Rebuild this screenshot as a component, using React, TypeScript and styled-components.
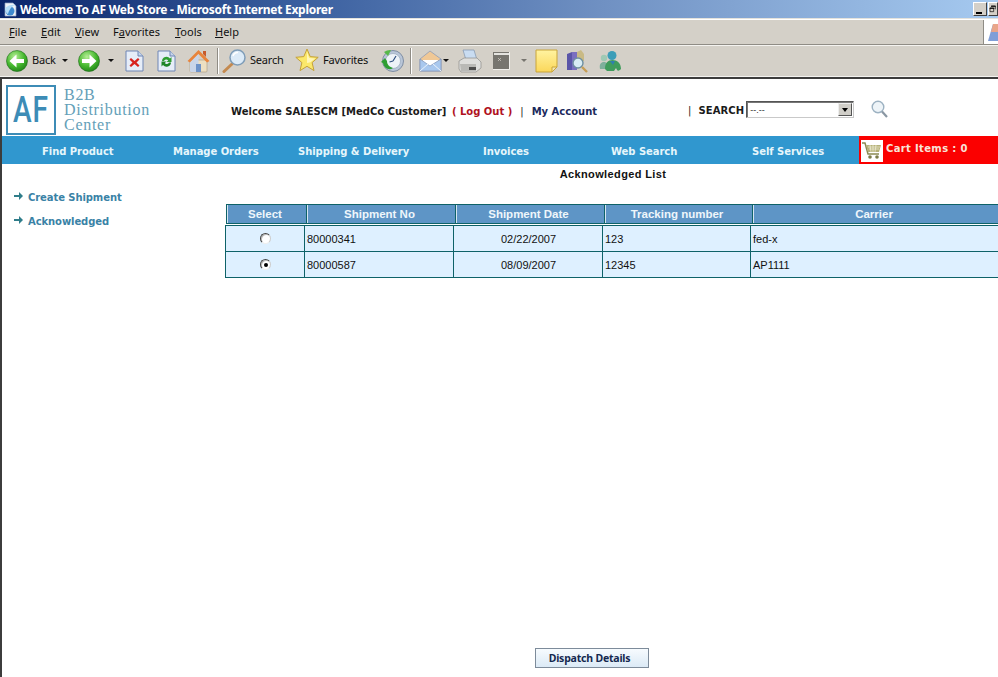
import React from 'react'
import styled, { createGlobalStyle } from 'styled-components'

const GlobalStyle = createGlobalStyle`
  html, body {
    margin: 0;
    height: 100%;
    overflow: hidden;
    background: #fff;
  }
  #root {
    height: 100%;
  }
`

const Window = styled.div`
  width: 998px;
  height: 677px;
  display: flex;
  flex-direction: column;
  overflow: hidden;
  font-family: 'Liberation Sans', Arial, sans-serif;
`

const TitleBar = styled.div`
  height: 18px;
  flex: none;
  display: flex;
  align-items: center;
  padding-left: 3px;
  background: linear-gradient(90deg, #0a246a 0%, #3a5f9f 30%, #6f90c2 60%, #a6caf0 100%);
  border-bottom: 1px solid #e4e2dc;
`

const TitleText = styled.div`
  margin-left: 2px;
  flex: 1;
  color: #fff;
  font: bold 12px 'Noto Sans', sans-serif;
  white-space: nowrap;
  letter-spacing: -0.27px;
`

const WinButton = styled.div<{ $clip?: boolean }>`
  width: ${p => (p.$clip ? '10px' : '14px')};
  height: 14px;
  margin-right: ${p => (p.$clip ? '0' : '1px')};
  background: #d4d0c8;
  border: 1px solid;
  border-color: #fff #404040 #404040 #fff;
  box-sizing: border-box;
  overflow: hidden;
  display: flex;
`

const MenuBar = styled.div`
  height: 24px;
  flex: none;
  display: flex;
  align-items: center;
  background: #d4d0c8;
  border-top: 1px solid #fff;
  border-bottom: 1px solid #8f8c85;
  font: 11px 'Noto Sans', 'Open Sans', sans-serif;
  color: #111;
`

const MenuItem = styled.span<{ $w: number }>`
  width: ${p => p.$w}px;
  margin-top: -2px;
  u {
    text-underline-offset: 1px;
  }
`

const MenuLead = styled.div`
  width: 9px;
`

const Throbber = styled.div`
  margin-left: auto;
  width: 15px;
  height: 24px;
  background: #fff;
  border-left: 1px solid #8f8c85;
  box-sizing: border-box;
  display: flex;
  align-items: center;
`

const Toolbar = styled.div`
  height: 31px;
  flex: none;
  display: flex;
  align-items: center;
  background: #d4d0c8;
  border-bottom: 1px solid #f4f3f0;
  box-shadow: inset 0 1px 0 #f4f3f0;
  font: 11px 'Noto Sans', 'Open Sans', sans-serif;
  color: #111;
`

const ToolSlot = styled.div<{ $left: number; $w: number }>`
  margin-left: ${p => p.$left}px;
  width: ${p => p.$w}px;
  flex: none;
  display: flex;
  align-items: center;
  justify-content: center;
  white-space: nowrap;
`

const ToolLabel = styled.span<{ $left: number; $w: number }>`
  margin: -2px 0 0 ${p => p.$left}px;
  width: ${p => p.$w}px;
  flex: none;
  white-space: nowrap;
  letter-spacing: -0.2px;
`

const ToolSeparator = styled.div<{ $left: number }>`
  margin-left: ${p => p.$left}px;
  width: 1px;
  height: 26px;
  flex: none;
  background: #8f8c85;
  box-shadow: 1px 0 0 #fff;
`

const Caret = styled.div<{ $left: number; $muted?: boolean }>`
  margin-left: ${p => p.$left}px;
  flex: none;
  width: 0;
  height: 0;
  border-left: 3px solid transparent;
  border-right: 3px solid transparent;
  border-top: 3px solid ${p => (p.$muted ? '#77756f' : '#111')};
`

const Page = styled.div`
  flex: 1;
  min-height: 0;
  display: flex;
  flex-direction: column;
  background: #fff;
  border-top: 2px solid #3c3c3c;
  border-left: 2px solid #3c3c3c;
`

const Header = styled.div`
  height: 57px;
  flex: none;
  box-sizing: border-box;
  padding-top: 4px;
  display: flex;
  align-items: center;
  font: bold 10px 'DejaVu Sans', sans-serif;
  color: #1a1a1a;
`

const LogoBox = styled.div`
  margin-left: 4px;
  width: 50px;
  height: 50px;
  flex: none;
  box-sizing: border-box;
  border: 2px solid #3d8cb6;
  display: flex;
  align-items: center;
  justify-content: center;
  color: #3d8cb6;
  font: 500 36px Roboto, sans-serif;
`

const LogoLetters = styled.span`
  display: inline-block;
  transform: scaleX(0.78);
  letter-spacing: 1px;
`

const LogoText = styled.div`
  margin-left: 8px;
  width: 167px;
  flex: none;
  color: #64a0b8;
  font: 16px/15px 'Liberation Serif', serif;
  letter-spacing: 0.72px;
`

const Welcome = styled.div`
  width: 457px;
  flex: none;
  margin-top: 4px;
  white-space: nowrap;
`

const LogOut = styled.span`
  color: #b0121e;
  margin: 0 4px 0 2px;
`

const Pipe = styled.span`
  font-weight: normal;
  margin: 0 8px 0 4px;
`

const Account = styled.span`
  color: #1b2a5c;
`

const SearchLabel = styled.div`
  display: flex;
  align-items: center;
  flex: none;
  margin-top: 2px;
  letter-spacing: 0.1px;
  span {
    font-weight: normal;
    margin-right: 7px;
  }
`

const SearchSelect = styled.div`
  margin-left: 2px;
  width: 108px;
  height: 17px;
  flex: none;
  box-sizing: border-box;
  border: 1px solid;
  border-color: #555 #c9c9c9 #c9c9c9 #555;
  box-shadow: inset 1px 1px 0 #777;
  display: flex;
  align-items: center;
  justify-content: space-between;
  padding: 0 1px 0 3px;
  font: 9px 'Liberation Sans', sans-serif;
  color: #333;
`

const SelectArrow = styled.div`
  width: 14px;
  height: 13px;
  background: #d0cec8;
  border: 1px solid;
  border-color: #eee #555 #555 #eee;
  box-sizing: border-box;
  display: flex;
  align-items: center;
  justify-content: center;
  &::after {
    content: '';
    border-left: 3px solid transparent;
    border-right: 3px solid transparent;
    border-top: 4px solid #000;
  }
`

const SearchIcon = styled.div`
  margin-left: 17px;
  margin-top: -2px;
  display: flex;
`

const Nav = styled.div`
  height: 28px;
  flex: none;
  display: flex;
  background: #3097cf;
`

const NavItems = styled.div`
  flex: 1;
  display: grid;
  grid-template-columns: 131px 125px 185px 128px 141px 1fr;
  align-items: center;
  padding: 2px 0 0 40px;
  color: #e6f6fb;
  font: bold 10px 'DejaVu Sans', sans-serif;
  letter-spacing: -0.05px;
  white-space: nowrap;
`

const CartBlock = styled.div`
  width: 139px;
  flex: none;
  background: #fb0000;
  display: flex;
  align-items: center;
  padding-left: 2px;
  box-sizing: border-box;
  color: #f8e4d8;
  font: bold 10px 'DejaVu Sans', sans-serif;
  letter-spacing: 0.35px;
`

const CartIcon = styled.div`
  width: 22px;
  height: 22px;
  background: #fff;
  display: flex;
  align-items: center;
  justify-content: center;
  margin-right: 3px;
  margin-top: 1px;
`

const CartLabel = styled.span`
  margin-top: -3px;
  white-space: nowrap;
`

const Content = styled.div`
  flex: 1;
  min-height: 0;
  display: flex;
`

const Sidebar = styled.div`
  width: 224px;
  flex: none;
  padding: 21px 0 0 12px;
  box-sizing: border-box;
`

const SideLink = styled.div`
  height: 24px;
  display: flex;
  align-items: center;
  gap: 5px;
  color: #3a82a6;
  font: bold 10px 'DejaVu Sans', sans-serif;
  letter-spacing: -0.08px;
  svg {
    margin-top: -3px;
  }
`

const Main = styled.div`
  width: 772px;
  flex: none;
  display: flex;
  flex-direction: column;
`

const ListTitle = styled.div`
  height: 19px;
  margin-top: 1px;
  width: 774px;
  text-align: center;
  color: #111;
  font: bold 11px/18px 'Liberation Sans', sans-serif;
  letter-spacing: 0.38px;
`

const Table = styled.div`
  display: flex;
  flex-direction: column;
`

const HeadRow = styled.div`
  margin: 20px 0 0 0;
  display: grid;
  grid-template-columns: 80px 149px 149px 148px 246px;
  height: 20px;
  border-top: 1px solid #0e6268;
  border-bottom: 1px solid #0e6268;
  box-sizing: border-box;
  width: 772px;
`

const HeadCell = styled.div`
  background: #5e95c6;
  border-left: 1px solid #0e6268;
  box-shadow: inset 1px 0 0 #d6e6f2;
  padding-right: 3px;
  color: #eef6fb;
  font: bold 11.5px/18px 'Liberation Sans', sans-serif;
  text-align: center;
`

const Body = styled.div`
  margin: 1px 0 0 -1px;
  width: 773px;
  border-top: 1px solid #0e6268;
`

const BodyRow = styled.div`
  display: grid;
  grid-template-columns: 79px 149px 149px 148px 248px;
  height: 26px;
  box-sizing: border-box;
  border-bottom: 1px solid #0e6268;
`

const BodyCell = styled.div<{ $align?: string }>`
  background: #def0ff;
  border-left: 1px solid #0e6268;
  padding: 1px 1px 0 2px;
  display: flex;
  align-items: center;
  justify-content: ${p => p.$align || 'flex-start'};
  color: #111;
  font: 11px 'Liberation Sans', sans-serif;
`

const Radio = styled.span<{ $on?: boolean }>`
  width: 11px;
  height: 11px;
  margin-top: -1px;
  border-radius: 50%;
  box-sizing: border-box;
  border: 1px solid;
  border-color: #444 #ccc #eee #444;
  background: #fff;
  box-shadow: inset 1px 1px 0 #bbb;
  display: flex;
  align-items: center;
  justify-content: center;
  &::after {
    content: '';
    width: 4px;
    height: 4px;
    border-radius: 50%;
    background: ${p => (p.$on ? '#000' : 'transparent')};
  }
`

const Footer = styled.div`
  margin-top: auto;
  margin-bottom: 9px;
  padding-left: 309px;
`

const DispatchButton = styled.button`
  width: 114px;
  height: 20px;
  padding: 0 5px 0 0;
  box-sizing: border-box;
  border: 1px solid #7d8b9a;
  background: linear-gradient(180deg, #f7fbfe 0%, #dceaf6 100%);
  color: #14284f;
  font: bold 10.5px 'Noto Sans', sans-serif;
  letter-spacing: -0.2px;
`

const BackIcon = ({ flip }: { flip?: boolean }) => (
  <svg width="22" height="22" viewBox="0 0 22 22">
    <defs>
      <radialGradient id={flip ? 'gf' : 'gb'} cx="0.4" cy="0.3" r="0.8">
        <stop offset="0" stopColor="#b6ee96" />
        <stop offset="0.55" stopColor="#45b82e" />
        <stop offset="1" stopColor="#1a7a14" />
      </radialGradient>
    </defs>
    <circle cx="11" cy="11" r="10.500" fill={`url(#${flip ? 'gf' : 'gb'})`} stroke="#1b6a18" strokeWidth="0.600" />
    <path
      d={flip ? 'M4 9h7.500V4.500L18.500 11l-7 6.500V13H4z' : 'M18 9h-7.500V4.500L3.500 11l7 6.500V13H18z'}
      fill="#fff"
    />
  </svg>
)

const StopIcon = () => (
  <svg width="19" height="22" viewBox="0 0 19 22">
    <path d="M1 1h12l5 5v15H1z" fill="#e6edf8" stroke="#6f86b5" />
    <path d="M13 1v5h5" fill="#c5d4ea" stroke="#6f86b5" />
    <path d="M6 8l3.500 3L13 8l1.500 1.500-3 3 3 3L13 17l-3.500-3L6 17l-1.500-1.500 3-3-3-3z" fill="#d8231f" />
  </svg>
)

const RefreshIcon = () => (
  <svg width="19" height="22" viewBox="0 0 19 22">
    <path d="M1 1h12l5 5v15H1z" fill="#e6edf8" stroke="#6f86b5" />
    <path d="M13 1v5h5" fill="#c5d4ea" stroke="#6f86b5" />
    <path d="M5 11a4.500 4.500 0 0 1 8-2.500l1.500-1.500v5h-5l1.700-1.600A2.500 2.500 0 0 0 7 11z" fill="#2f9e33" />
    <path d="M14 12.500a4.500 4.500 0 0 1-8 2.500L4.500 16.500v-5h5L7.800 13.100A2.500 2.500 0 0 0 12 12.500z" fill="#1e8428" />
  </svg>
)

const HomeIcon = () => (
  <svg width="23" height="24" viewBox="0 0 23 24">
    <path d="M3 11h17v11a1 1 0 0 1-1 1H4a1 1 0 0 1-1-1z" fill="#ecdfc2" stroke="#a8997e" strokeWidth="0.600" />
    <path d="M0.500 12L11.500 1 22.500 12 20 13.500 11.500 5 3 13.500z" fill="#e8843c" />
    <path d="M3 13.500L11.500 5v18H4a1 1 0 0 1-1-1z" fill="#c9d5e9" />
    <path d="M9 15h5v8H9z" fill="#6d92c9" />
    <path d="M16 2h3v6l-3-3z" fill="#c75a2b" />
  </svg>
)

const SearchGlass = () => (
  <svg width="25" height="25" viewBox="0 0 25 25">
    <path d="M10 16L2 23.500" stroke="#c48a50" strokeWidth="3" strokeLinecap="round" />
    <circle cx="15.500" cy="9.500" r="7.500" fill="#dcebf8" stroke="#7f9db8" strokeWidth="1.500" />
    <path d="M11 8a5 5 0 0 1 5-3.500" stroke="#fff" strokeWidth="1.500" fill="none" />
  </svg>
)

const StarIcon = () => (
  <svg width="24" height="25" viewBox="0 0 24 25">
    <path
      d="M12 1l3.200 7.600 8 .7-6.100 5.300 1.900 8L12 18.300 5 22.600l1.900-8L.8 9.300l8-.7z"
      fill="#fbe86b"
      stroke="#c4a13a"
    />
    <path d="M12 4l2.200 6 6 .5-4.800 3.800L12 15z" fill="#fff6b8" />
  </svg>
)

const HistoryIcon = () => (
  <svg width="24" height="24" viewBox="0 0 24 24">
    <circle cx="13" cy="12" r="10.500" fill="#b9c6d8" stroke="#7f8ea3" />
    <circle cx="13" cy="12" r="7.500" fill="#eef3f8" stroke="#8fa0b6" strokeWidth="0.600" />
    <path d="M13 12l3-5M13 12l-3.500 1" stroke="#2f4f7f" strokeWidth="1.200" />
    <path d="M1 13l4-4 2 3c0 4 3 6 6 7-4 3-9 0-10-5z" fill="#2f9e33" />
    <path d="M4 3a11 11 0 0 1 7-2L8 7z" fill="#57b84a" />
  </svg>
)

const MailIcon = () => (
  <svg width="23" height="24" viewBox="0 0 23 24">
    <path d="M1 10l10-8 11 8v12H1z" fill="#f0c896" stroke="#8797b6" strokeWidth="0.700" />
    <path d="M4 11h15v5l-7 4-8-4z" fill="#fff" />
    <path d="M1 10l10 7 11-7v12H1z" fill="#a9c8ee" stroke="#7e93b8" strokeWidth="0.700" />
    <path d="M1 22l8-7M22 22l-8-7" stroke="#ecf3fb" strokeWidth="1" />
  </svg>
)

const PrintIcon = () => (
  <svg width="24" height="24" viewBox="0 0 24 24">
    <path d="M5 1h11l3 10H8z" fill="#c9dcf1" stroke="#7f94ad" strokeWidth="0.700" />
    <path d="M1 12l5-3h13l4 4v6l-5 4H3l-2-3z" fill="#dededc" stroke="#8d8d8a" strokeWidth="0.700" />
    <path d="M2 15h16v7H3z" fill="#b9b9b6" />
    <path d="M11 18h7v3h-7z" fill="#4c4c4c" />
  </svg>
)

const EditIcon = () => (
  <svg width="18" height="18" viewBox="0 0 18 18">
    <path d="M0 0h17v17H0z" fill="#77756f" />
    <path d="M1 1h15v2H1z" fill="#e4e3df" />
    <path d="M5 6l3 3M8 6l-3 3" stroke="#d4d0c8" strokeWidth="0.700" />
    <path d="M16.500 0v17.500H0" stroke="#f0efeb" fill="none" />
  </svg>
)

const NoteIcon = () => (
  <svg width="23" height="24" viewBox="0 0 23 24">
    <defs>
      <linearGradient id="note" x1="0" y1="0" x2="0" y2="1">
        <stop offset="0" stopColor="#fff3a0" />
        <stop offset="1" stopColor="#fbd75a" />
      </linearGradient>
    </defs>
    <path d="M1 1h21v17l-5 5H1z" fill="url(#note)" stroke="#c9a53a" />
    <path d="M17 23v-5h5z" fill="#f2e6b4" stroke="#c9a53a" />
  </svg>
)

const ResearchIcon = () => (
  <svg width="23" height="24" viewBox="0 0 23 24">
    <path d="M1 5l5-2v18H1z" fill="#5a55a8" />
    <path d="M6 3h5v18H6z" fill="#7a6fc0" />
    <path d="M11 3l4-2 3 4v7h-7z" fill="#c9ba85" />
    <circle cx="12" cy="14" r="5" fill="#d8ecf4" stroke="#6e8fa0" strokeWidth="1.400" />
    <path d="M16 18l5 5" stroke="#c79e55" strokeWidth="2.400" />
  </svg>
)

const MessengerIcon = () => (
  <svg width="24" height="22" viewBox="0 0 24 22">
    <circle cx="6" cy="8" r="3.200" fill="#9fc9b4" />
    <path d="M2 19c-1-5 1-7 4-7s4 2 4 7z" fill="#7eb09c" />
    <circle cx="14" cy="5.500" r="4.500" fill="#3c9db8" />
    <path d="M7 19c0-6 3-9 7.500-9s8.500 3 8.500 9c-2 2-3 2-4 1l-1-2-2 3H9z" fill="#3f9c5c" />
    <path d="M12 11l3 4 2-4z" fill="#2f7fb0" />
  </svg>
)

const PageGlobe = () => (
  <svg width="15" height="15" viewBox="0 0 15 15">
    <path d="M2 1h8l3 3v10H2z" fill="#eef2f8" stroke="#8fa3c4" strokeWidth="0.700" />
    <circle cx="7" cy="9" r="4.500" fill="#3f8ad0" />
    <path d="M2 6c3-3 8-4 11-3-2 0-6 2-8 9-1 0-3-3-3-6z" fill="#b5dcf7" />
  </svg>
)

const MinimizeGlyph = () => (
  <svg width="12" height="12" viewBox="0 0 12 12">
    <path d="M2 9h6v2H2z" fill="#000" />
  </svg>
)

const RestoreGlyph = () => (
  <svg width="12" height="12" viewBox="0 0 12 12">
    <path d="M3.500 1.500h6v5M1.500 4.500h5.500v5.500H1.500z" fill="none" stroke="#000" />
    <path d="M1 4h7v1.500H1zM3 1h7v1.500H3z" fill="#000" />
  </svg>
)

const ThrobberLogo = () => (
  <svg width="14" height="22" viewBox="0 0 14 22">
    <path d="M4 20L9 3h5v17z" fill="#7f9ed8" />
    <path d="M9 3h5v8H7z" fill="#e9a58a" />
  </svg>
)

const MiniArrow = () => (
  <svg width="9" height="8" viewBox="0 0 9 8">
    <path d="M0 3h5V0l4 4-4 4V5H0z" fill="#2f7d8a" />
  </svg>
)

const CartGlyph = () => (
  <svg width="20" height="19" viewBox="0 0 20 19">
    <path d="M0 2h3l3 11h11" fill="none" stroke="#8a8a52" strokeWidth="1.500" />
    <path d="M4 4h15l-2 7H6z" fill="#b5b178" />
    <path d="M6 6h12M7 8h10M8 4l1 7M11 4v7M14 4l-1 7" stroke="#f2f1dd" strokeWidth="0.700" />
    <circle cx="8" cy="16" r="1.800" fill="#7c7c48" />
    <circle cx="15" cy="16" r="1.800" fill="#7c7c48" />
  </svg>
)

const SearchGlassRight = () => (
  <svg width="17" height="18" viewBox="0 0 17 18">
    <circle cx="7" cy="7" r="5.800" fill="#eef4f8" stroke="#9db2c2" strokeWidth="1.400" />
    <path d="M11 11.500l5 5.500" stroke="#8a97a3" strokeWidth="2.200" />
  </svg>
)

const COLUMNS = ['Select', 'Shipment No', 'Shipment Date', 'Tracking number', 'Carrier']

const ROWS = [
  { no: '80000341', date: '02/22/2007', tracking: '123', carrier: 'fed-x', on: false },
  { no: '80000587', date: '08/09/2007', tracking: '12345', carrier: 'AP1111', on: true },
]

const App: React.FunctionComponent = () => {
  return (
    <Window>
      <GlobalStyle />
      <TitleBar>
        <PageGlobe />
        <TitleText>Welcome To AF Web Store - Microsoft Internet Explorer</TitleText>
        <WinButton>
          <MinimizeGlyph />
        </WinButton>
        <WinButton $clip>
          <RestoreGlyph />
        </WinButton>
      </TitleBar>
      <MenuBar>
        <MenuLead />
        <MenuItem $w={32}><u>F</u>ile</MenuItem>
        <MenuItem $w={34}><u>E</u>dit</MenuItem>
        <MenuItem $w={38}><u>V</u>iew</MenuItem>
        <MenuItem $w={62}>F<u>a</u>vorites</MenuItem>
        <MenuItem $w={40}><u>T</u>ools</MenuItem>
        <MenuItem $w={30}><u>H</u>elp</MenuItem>
        <Throbber>
          <ThrobberLogo />
        </Throbber>
      </MenuBar>
      <Toolbar>
        <ToolSlot $left={6} $w={22}><BackIcon /></ToolSlot>
        <ToolLabel $left={4} $w={26}>Back</ToolLabel>
        <Caret $left={4} />
        <ToolSlot $left={10} $w={22}><BackIcon flip /></ToolSlot>
        <Caret $left={8} />
        <ToolSlot $left={11} $w={19}><StopIcon /></ToolSlot>
        <ToolSlot $left={13} $w={19}><RefreshIcon /></ToolSlot>
        <ToolSlot $left={11} $w={23}><HomeIcon /></ToolSlot>
        <ToolSeparator $left={7} />
        <ToolSlot $left={4} $w={25}><SearchGlass /></ToolSlot>
        <ToolLabel $left={3} $w={38}>Search</ToolLabel>
        <ToolSlot $left={7} $w={24}><StarIcon /></ToolSlot>
        <ToolLabel $left={4} $w={53}>Favorites</ToolLabel>
        <ToolSlot $left={4} $w={24}><HistoryIcon /></ToolSlot>
        <ToolSeparator $left={6} />
        <ToolSlot $left={8} $w={23}><MailIcon /></ToolSlot>
        <Caret $left={1} />
        <ToolSlot $left={9} $w={24}><PrintIcon /></ToolSlot>
        <ToolSlot $left={11} $w={18}><EditIcon /></ToolSlot>
        <Caret $left={10} $muted />
        <ToolSlot $left={8} $w={23}><NoteIcon /></ToolSlot>
        <ToolSlot $left={8} $w={23}><ResearchIcon /></ToolSlot>
        <ToolSlot $left={9} $w={24}><MessengerIcon /></ToolSlot>
      </Toolbar>
      <Page>
        <Header>
          <LogoBox>
            <LogoLetters>AF</LogoLetters>
          </LogoBox>
          <LogoText>
            B2B
            <br />
            Distribution
            <br />
            Center
          </LogoText>
          <Welcome>
            Welcome SALESCM [MedCo Customer]
            <LogOut> ( Log Out )</LogOut>
            <Pipe>|</Pipe>
            <Account>My Account</Account>
          </Welcome>
          <SearchLabel>
            <span>|</span>SEARCH
          </SearchLabel>
          <SearchSelect>
            --.--
            <SelectArrow />
          </SearchSelect>
          <SearchIcon>
            <SearchGlassRight />
          </SearchIcon>
        </Header>
        <Nav>
          <NavItems>
            <span>Find Product</span>
            <span>Manage Orders</span>
            <span>Shipping &amp; Delivery</span>
            <span>Invoices</span>
            <span>Web Search</span>
            <span>Self Services</span>
          </NavItems>
          <CartBlock>
            <CartIcon>
              <CartGlyph />
            </CartIcon>
            <CartLabel>Cart Items : 0</CartLabel>
          </CartBlock>
        </Nav>
        <Content>
          <Sidebar>
            <SideLink>
              <MiniArrow />
              Create Shipment
            </SideLink>
            <SideLink>
              <MiniArrow />
              Acknowledged
            </SideLink>
          </Sidebar>
          <Main>
            <ListTitle>Acknowledged List</ListTitle>
            <Table>
              <HeadRow>
                {COLUMNS.map(col => (
                  <HeadCell key={col}>{col}</HeadCell>
                ))}
              </HeadRow>
              <Body>
                {ROWS.map(row => (
                  <BodyRow key={row.no}>
                    <BodyCell $align="center">
                      <Radio $on={row.on} />
                    </BodyCell>
                    <BodyCell>{row.no}</BodyCell>
                    <BodyCell $align="center">{row.date}</BodyCell>
                    <BodyCell>{row.tracking}</BodyCell>
                    <BodyCell>{row.carrier}</BodyCell>
                  </BodyRow>
                ))}
              </Body>
            </Table>
            <Footer>
              <DispatchButton>Dispatch Details</DispatchButton>
            </Footer>
          </Main>
        </Content>
      </Page>
    </Window>
  )
}

export default App
